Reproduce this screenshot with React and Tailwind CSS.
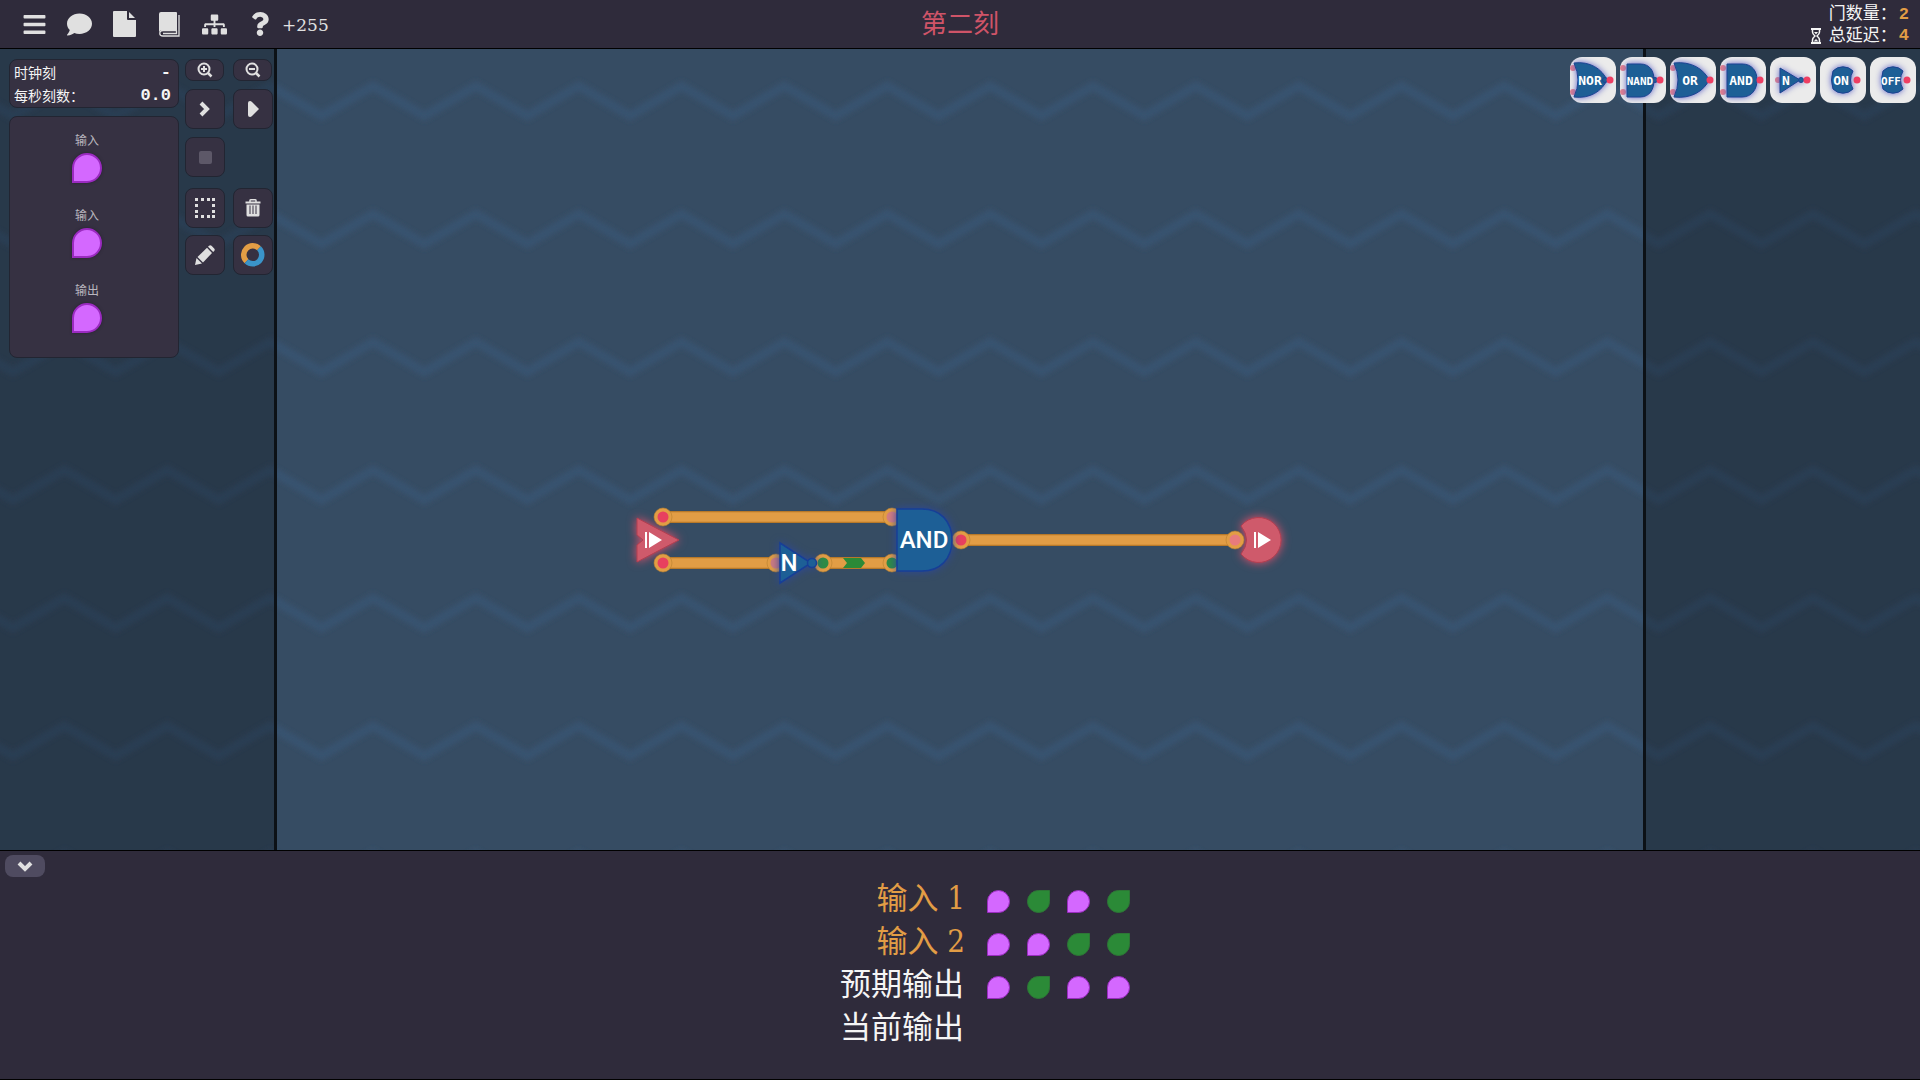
import React from "react";
import { FaBars, FaComment, FaSitemap, FaQuestion } from "react-icons/fa";

const ROWS = [101, 229, 357, 485, 613, 741, 869];

function Zigzags() {
  const points = Array.from({ length: 60 }, (_, i) => [13 + ((i - 2) * 360) / 7, i % 2 ? -15 : 15]);
  return (
    <svg className="absolute inset-0 size-full" aria-hidden="true">
      <defs>
        <filter id="soft" x="-5%" y="-50%" width="110%" height="200%">
          <feGaussianBlur stdDeviation="2.5" />
        </filter>
      </defs>
      {ROWS.map((y) => (
        <polyline
          key={y}
          points={points.map(([px, py]) => `${px},${py + y - 49}`).join(" ")}
          fill="none"
          stroke="#38526f"
          strokeWidth="9"
          filter="url(#soft)"
        />
      ))}
    </svg>
  );
}

function Signal({ on = false, large = false }) {
  if (large) {
    return (
      <span className="block size-[30px] rounded-[50%_50%_50%_0] border-2 border-[#9a2bc0] bg-[#d468ff] shadow-[0_0_3px_#26222f]" />
    );
  }
  return on ? (
    <span className="block size-[23px] rounded-[50%_0_50%_50%] border border-[#2d7636] bg-[#2b8a37]" />
  ) : (
    <span className="block size-[23px] rounded-[50%_50%_50%_0] border border-[#9a2bc0] bg-[#d468ff]" />
  );
}

const GATES = [
  { name: "NOR", body: "M4 6 C20 4 32 12 37 23 C32 34 20 42 4 40 Q12 23 4 6Z", ins: [11, 35], bubble: 35, dot: 40, tx: 20 },
  { name: "NAND", body: "M7 7 H20 C30 7 34 14 34 23 C34 32 30 40 20 40 H7Z", ins: [11, 35], bubble: 35, dot: 40, tx: 20, narrow: true },
  { name: "OR", body: "M4 6 C21 4 34 12 39 23 C34 34 21 42 4 40 Q12 23 4 6Z", ins: [11, 35], dot: 40, tx: 20 },
  { name: "AND", body: "M7 7 H22 C32 7 37 14 37 23 C37 32 32 40 22 40 H7Z", ins: [11, 35], dot: 40, tx: 21 },
  { name: "N", body: "M10 11 L30 23 L10 36Z", ins: [23], bubble: 31, dot: 37, tx: 16 },
  { name: "ON", body: "M13 14 A14 14 0 0 1 33 14 Q28 23 33 32 A14 14 0 0 1 13 32 Q10 23 13 14Z", ins: [], dot: 37, tx: 21 },
  { name: "OFF", body: "M13 14 A14 14 0 0 1 33 14 Q28 23 33 32 A14 14 0 0 1 13 32 Q10 23 13 14Z", ins: [], dot: 37, tx: 21, narrow: true },
];

function GateIcon({ gate }) {
  return (
    <svg viewBox="0 0 46 46" className="size-[46px]" aria-hidden="true">
      <g fill="#e27f8d">
        {gate.ins.map((y) => (
          <circle key={y} cx={gate.name === "N" ? 8 : 3} cy={y} r="3" />
        ))}
      </g>
      <g className="drop-shadow-[0_0_3px_#5b5fc4]" fill="#1d5f96" stroke="#1c4392">
        <path d={gate.body} />
        {gate.bubble && <circle cx={gate.bubble} cy="23" r="2.5" />}
      </g>
      <circle cx={gate.dot} cy="23" r="3.5" fill="#ee3f63" />
      <text
        x={gate.tx}
        y="28"
        textAnchor="middle"
        fill="#fff"
        className={
          gate.narrow
            ? "font-['DejaVu_Sans_Mono',monospace] text-[11px] font-bold"
            : "font-['DejaVu_Sans_Mono',monospace] text-[13px] font-bold"
        }
      >
        {gate.name}
      </text>
    </svg>
  );
}

function ToolButton({ label, children, small = false, disabled = false }) {
  return (
    <button
      type="button"
      aria-label={label}
      disabled={disabled}
      className={
        small
          ? "flex h-[22px] w-[39px] items-center justify-center rounded-lg border border-[#222532] bg-[#363142] text-[#e0e0e0]"
          : "flex size-[40px] items-center justify-center rounded-lg border border-[#222532] bg-[#363142] text-[#e0e0e0]"
      }
    >
      {children}
    </button>
  );
}

function Magnifier({ plus = false }) {
  return (
    <svg viewBox="0 0 16 16" className="size-4" fill="none" stroke="currentColor" strokeWidth="2">
      <circle cx="7" cy="7" r="5.5" />
      <path d="M11 11 L14.500 14.500" strokeWidth="2.5" />
      <path d={plus ? "M4 7 H10 M7 4 V10" : "M4 7 H10"} />
    </svg>
  );
}

function SelectionIcon() {
  const steps = [0, 6, 12, 17];
  return (
    <svg viewBox="0 0 20 20" className="size-5" fill="currentColor">
      {steps.map((a) =>
        steps
          .filter((b) => a === 0 || a === 17 || b === 0 || b === 17)
          .map((b) => <rect key={`${a}-${b}`} x={a} y={b} width="3" height="3" />),
      )}
    </svg>
  );
}

function TrashIcon() {
  return (
    <svg viewBox="0 0 16 18" className="h-[18px] w-4">
      <path d="M5 3 V1.500 Q5 0.800 6 0.800 H10 Q11 0.800 11 1.500 V3" fill="none" stroke="currentColor" strokeWidth="1.5" />
      <path d="M0.500 2.500 H15.500 V4.500 H0.500Z M1.500 5.500 H14.500 V16 Q14.500 17.500 13 17.500 H3 Q1.500 17.500 1.500 16Z" fill="currentColor" />
      <path d="M5 6.500 V15 M8 6.500 V15 M11 6.500 V15" stroke="#363142" strokeWidth="1" />
    </svg>
  );
}

function PencilIcon() {
  return (
    <svg viewBox="0 0 20 20" className="size-5" fill="currentColor">
      <path d="M0 20 L1.500 13 L7 18.500Z" />
      <path d="M2.500 12 L12 2.800 L17 8 L8 17.500Z" />
      <path d="M13 1.800 L14 0.800 Q15.200 -0.300 16.500 0.800 L19.200 3.500 Q20.300 4.800 19.200 6 L18.200 7Z" />
    </svg>
  );
}

function RingIcon() {
  return (
    <svg viewBox="0 0 24 24" className="size-6" fill="none" strokeWidth="5.5">
      <path d="M18 5.300 A9 9 0 1 0 5.500 18.300" stroke="#e29d45" />
      <path d="M18 5.300 A9 9 0 0 1 5.500 18.300" stroke="#3a94c9" />
    </svg>
  );
}

function FileIcon() {
  return (
    <svg viewBox="0 0 23 26" className="h-[26px] w-[23px]" fill="currentColor">
      <path d="M0 1 Q0 0 1 0 H14 V8 Q14 9 15 9 H23 V25 Q23 26 22 26 H1 Q0 26 0 25Z" />
      <path d="M16 1 L22 7 H16Z" />
    </svg>
  );
}

function BookIcon() {
  return (
    <svg viewBox="0 0 21 25" className="h-[25px] w-[21px]">
      <path d="M2 0 H17 Q18 0 18 1 V18 H4 Q0 18 0 21 V2 Q0 0 2 0Z" fill="currentColor" />
      <path d="M18 18.500 H4 Q0.800 18.500 0.800 21.500 Q0.800 24 4 24 H20 V3 M4 21.500 H17.500 V18.500" fill="none" stroke="currentColor" strokeWidth="1.3" />
    </svg>
  );
}

function Terminal({ x, y, fill = "#e8405f" }) {
  return (
    <g>
      <circle cx={x} cy={y} r="9" fill="#e29d45" stroke="#b9822f" strokeWidth="0.6" />
      <circle cx={x} cy={y} r="5.5" fill={fill} />
    </g>
  );
}

function Wire({ x1, x2, y }) {
  return (
    <g>
      <path d={`M${x1} ${y}H${x2}`} stroke="#b87929" strokeWidth="12" />
      <path d={`M${x1} ${y}H${x2}`} stroke="#e29d45" strokeWidth="9.5" />
    </g>
  );
}

function Circuit() {
  return (
    <svg viewBox="620 490 680 110" className="h-[110px] w-[680px] shrink-0 overflow-visible" role="img" aria-label="电路">
      <g className="drop-shadow-[0_0_5px_#e0506a]" fill="#cf5a6b" stroke="#b23e50">
        <path d="M637 518 L679 540 L637 562 V545 L643 540 L637 535Z" />
        <path d="M1241 526 A22.500 22.500 0 1 1 1241 554 Q1252 540 1241 526Z" />
      </g>
      <path d="M645 532 H647 V548 H645Z M649 532 L662 540 L649 548Z" fill="#fff" />
      <path d="M1254 532 H1256 V548 H1254Z M1258 532 L1271 540 L1258 548Z" fill="#fff" />
      <Wire x1={663} x2={890} y={517} />
      <Wire x1={663} x2={775} y={563} />
      <Wire x1={823} x2={890} y={563} />
      <Wire x1={961} x2={1234} y={540} />
      <path d="M843 558 H861 L865 563 L861 568 H843 L847 563Z" fill="#2b8a37" />
      <Terminal x={663} y={517} />
      <Terminal x={663} y={563} />
      <Terminal x={776} y={563} fill="#cd7b7f" />
      <Terminal x={823} y={563} fill="#2e8b45" />
      <Terminal x={892} y={517} fill="#d67d80" />
      <Terminal x={892} y={563} fill="#2e8b45" />
      <Terminal x={961} y={540} />
      <Terminal x={1235} y={540} fill="#e77b7c" />
      <g className="drop-shadow-[0_0_4px_#2c479c]" fill="#1d5f96" stroke="#173f97" strokeWidth="1.5">
        <path d="M897 509 H922 C940 509 952 521 952 540 C952 559 940 571 922 571 H897Z" />
        <path d="M780 543 L811 563 L780 583Z" />
        <circle cx="812" cy="563" r="4.5" />
      </g>
      <text x="924" y="548" textAnchor="middle" fill="#fff" className="font-['Roboto',sans-serif] text-[24px] font-medium">
        AND
      </text>
      <text x="789" y="571" textAnchor="middle" fill="#fff" className="font-['Roboto',sans-serif] text-[24px] font-medium">
        N
      </text>
    </svg>
  );
}

const NAV = [
  ["菜单", <FaBars className="size-[25px]" />],
  ["聊天", <FaComment className="size-[25px]" />],
  ["文件", <FileIcon />],
  ["手册", <BookIcon />],
  ["层级", <FaSitemap className="size-[25px]" />],
  ["帮助", <FaQuestion className="size-[24px]" />],
];

const TRUTH = [
  ["输入", "1", [0, 1, 0, 1]],
  ["输入", "2", [0, 0, 1, 1]],
  ["预期输出", "", [0, 1, 0, 0]],
  ["当前输出", "", []],
];

export default function App() {
  return (
    <div className="flex h-screen flex-col overflow-hidden bg-[#2f2b3b] font-['Inter','Noto_Sans_CJK_SC',sans-serif] text-[#f5f5f5]">
      <header className="grid h-[49px] shrink-0 grid-cols-[1fr_auto_1fr] items-center border-b border-black">
        <nav className="flex items-center pl-[12px] text-[#e0e0e0]">
          {NAV.map(([label, icon]) => (
            <button key={label} type="button" aria-label={label} className="flex w-[45px] items-center justify-center">
              {icon}
            </button>
          ))}
          <span className="pt-[3px] font-['DejaVu_Serif',serif] text-[17px]">+255</span>
        </nav>
        <h1 className="text-[26px] leading-[46px] text-[#cf5468]">第二刻</h1>
        <div className="flex flex-col items-end pt-px pr-[11px] text-[17px] leading-[21px]">
          <p>
            门数量：<span className="ml-[2px] font-['Liberation_Mono',monospace] font-bold text-[#e29d45]">2</span>
          </p>
          <p className="flex items-center">
            <svg viewBox="0 0 12 16" className="mr-[7px] h-4 w-3" fill="none" stroke="currentColor" strokeWidth="1.5" aria-hidden="true">
              <path d="M1 1 H11 M1 15 H11" strokeWidth="2" />
              <path d="M2.500 1 V4 Q2.500 6 5 8 Q2.500 10 2.500 12 V15 M9.500 1 V4 Q9.500 6 7 8 Q9.500 10 9.500 12 V15" />
              <path d="M4 4 H8 L6 6.500Z M3.500 13.500 L6 11 L8.500 13.500Z" fill="currentColor" stroke="none" />
            </svg>
            总延迟：<span className="ml-[2px] font-['Liberation_Mono',monospace] font-bold text-[#e29d45]">4</span>
          </p>
        </div>
      </header>

      <main className="relative flex flex-1 overflow-hidden bg-[#364c63]">
        <Zigzags />
        <aside className="relative flex w-[277px] shrink-0 items-start gap-[6px] border-r-[3px] border-[#0c1116] bg-black/25 pt-[10px] pl-[9px]">
          <div className="flex w-[170px] shrink-0 flex-col gap-2">
            <dl className="grid h-[49px] grid-cols-[1fr_auto] items-center rounded-lg border border-[#222532] bg-[#363142] py-px pr-[7px] pl-1 text-[14px] leading-[23px]">
              <dt>时钟刻</dt>
              <dd className="text-right font-['Liberation_Mono',monospace] text-[17px] font-bold">-</dd>
              <dt>每秒刻数：</dt>
              <dd className="text-right font-['Liberation_Mono',monospace] text-[17px] font-bold">0.0</dd>
            </dl>
            <ul className="flex h-[242px] flex-col gap-[25px] rounded-lg border border-[#222532] bg-[#363142] pt-4 pr-[14px]">
              {["输入", "输入", "输出"].map((label, i) => (
                <li key={i} className="flex flex-col items-center gap-1">
                  <span className="text-[12px] leading-4 text-[#b9b6bf]">{label}</span>
                  <Signal large />
                </li>
              ))}
            </ul>
          </div>
          <div className="flex shrink-0 flex-col">
            <div className="flex gap-[9px] pb-2">
              <ToolButton label="放大" small>
                <Magnifier plus />
              </ToolButton>
              <ToolButton label="缩小" small>
                <Magnifier />
              </ToolButton>
            </div>
            <div className="flex gap-2 pb-2">
              <ToolButton label="单步">
                <svg viewBox="0 0 12 16" className="h-4 w-3" fill="none" stroke="currentColor" strokeWidth="4">
                  <path d="M2 2 L8 8 L2 14" />
                </svg>
              </ToolButton>
              <ToolButton label="运行">
                <svg viewBox="0 0 11 16" className="h-4 w-[11px]" fill="currentColor">
                  <path d="M0 2 Q0 0 2 0 Q3 0 4 1 L11 8 L4 15 Q3 16 2 16 Q0 16 0 14Z" />
                </svg>
              </ToolButton>
            </div>
            <div className="pb-[11px]">
              <ToolButton label="停止" disabled>
                <span className="size-[13px] rounded-[2px] bg-[#5d5868]" />
              </ToolButton>
            </div>
            <div className="flex gap-2 pb-[7px]">
              <ToolButton label="框选">
                <SelectionIcon />
              </ToolButton>
              <ToolButton label="删除">
                <TrashIcon />
              </ToolButton>
            </div>
            <div className="flex gap-2">
              <ToolButton label="编辑">
                <PencilIcon />
              </ToolButton>
              <ToolButton label="配色">
                <RingIcon />
              </ToolButton>
            </div>
          </div>
        </aside>
        <section className="relative flex flex-1 items-start justify-center pt-[441px]">
          <Circuit />
        </section>
        <aside className="relative w-[277px] shrink-0 border-l-[3px] border-[#0c1116] bg-black/25" />
        <div className="absolute top-2 right-1 flex gap-1">
          {GATES.map((gate) => (
            <button key={gate.name} type="button" className="size-[46px] overflow-hidden rounded-xl bg-[#ebebeb]">
              <GateIcon gate={gate} />
            </button>
          ))}
        </div>
      </main>

      <footer className="h-[230px] shrink-0 border-y border-black">
        <div className="h-[25px] pt-1 pl-[5px]">
          <button type="button" aria-label="收起" className="flex h-[22px] w-[40px] items-center justify-center rounded-lg bg-[#4f4b60] text-[#e0e0e0]">
            <svg viewBox="0 0 16 12" className="h-3 w-4" fill="none" stroke="currentColor" strokeWidth="4">
              <path d="M2 3 L8 9 L14 3" />
            </svg>
          </button>
        </div>
        <div className="pl-[10px]">
          <table className="w-full table-fixed border-collapse">
            <tbody>
              {TRUTH.map(([label, index, values]) => (
                <tr key={label + index} className="h-[43px]">
                  <th
                    scope="row"
                    className={
                      index
                        ? "p-0 text-right align-middle text-[31px] leading-[42px] font-normal text-[#e29d45]"
                        : "p-0 pr-px text-right align-middle text-[31px] leading-[42px] font-normal"
                    }
                  >
                    {label}
                    {index && (
                      <>
                        {" "}
                        <span className="font-['DejaVu_Serif_Condensed','DejaVu_Serif',serif] leading-none">{index}</span>
                      </>
                    )}
                  </th>
                  <td className="p-0 pl-[22px] align-middle">
                    <div className="flex gap-[17px] pt-2">
                      {values.map((v, i) => (
                        <Signal key={i} on={v === 1} />
                      ))}
                    </div>
                  </td>
                </tr>
              ))}
            </tbody>
          </table>
        </div>
      </footer>
    </div>
  );
}
